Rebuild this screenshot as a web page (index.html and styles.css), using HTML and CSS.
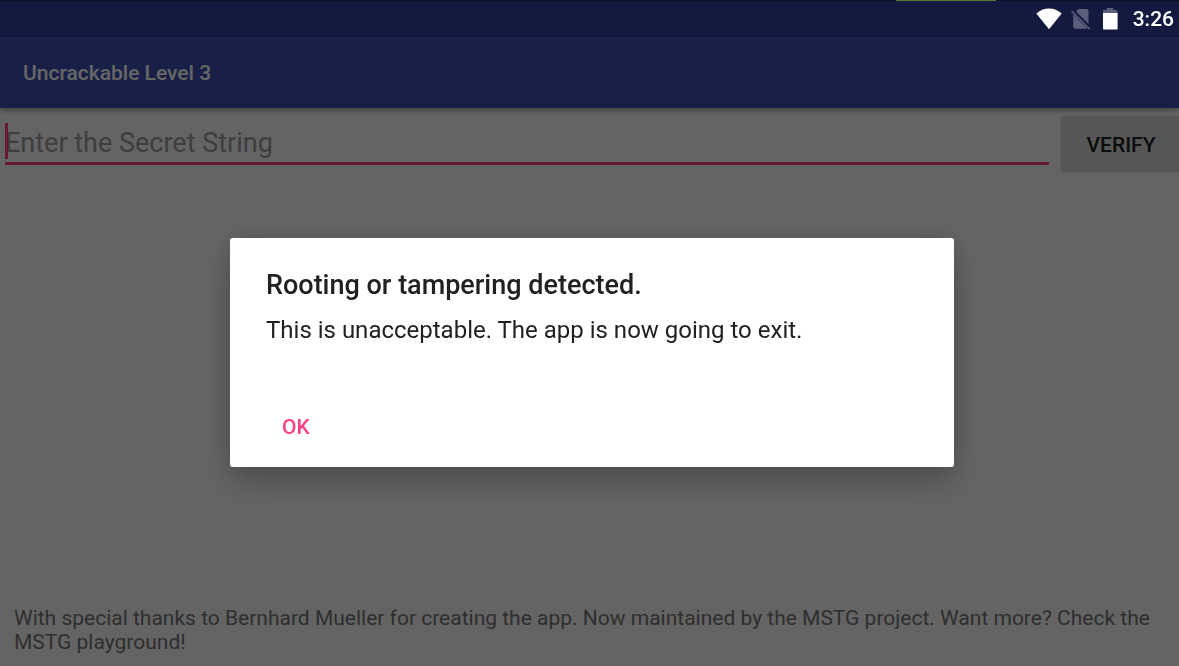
FILE: index.html
```html
<!DOCTYPE html>
<html lang="en">
<head>
    <meta charset="UTF-8">
    <title>Uncrackable Level 3</title>
    <meta name="viewport" content="width=device-width, initial-scale=1.0">
    <link rel="stylesheet" href="styles.css">
</head>
<body>

    <div class="status-bar">
        <div class="status-icons">
            <svg class="wifi" width="26" height="22" viewBox="0 0 26 22">
                <path fill="#fff" d="M13 21.200L.3 5.600C3.800 2.200 8.200.4 13 .4s9.200 1.800 12.700 5.200z"/>
            </svg>
            <svg class="no-sim" width="20" height="22" viewBox="0 0 20 22">
                <path fill="#5b5f7c" d="M5 3.500L7.500 1h8c1.300 0 2 .8 2 2v13zM2.300 6.300l14.400 14.400H4.300c-1.200 0-2-.8-2-2z"/>
                <path stroke="#5b5f7c" stroke-width="1.600" d="M.6 3l18.200 18.200"/>
            </svg>
            <svg class="battery" width="15" height="22" viewBox="0 0 15 22">
                <path fill="#5b5f7c" d="M0 6V3.200c0-.8.6-1.200 1.200-1.200h2.600V0h6.600v2h3c.8 0 1.200.5 1.200 1.200V6z"/>
                <path fill="#fff" d="M0 5h14.600v15.600c0 .6-.4 1-1 1H1c-.6 0-1-.4-1-1z"/>
            </svg>
            <span class="clock">3:26</span>
        </div>
    </div>

    <header class="toolbar">
        <h1>Uncrackable Level 3</h1>
    </header>

    <main>
        <form class="secret-form" onsubmit="return false;">
            <div class="field">
                <input type="text" id="secret" aria-label="Enter the Secret String" placeholder="Enter the Secret String">
            </div>
            <button type="submit" class="verify">VERIFY</button>
        </form>
        <p class="thanks">With special thanks to Bernhard Mueller for creating the app. Now maintained by the MSTG project. Want more? Check the MSTG playground!</p>
    </main>

    <div class="scrim">
        <div class="dialog" role="alertdialog" aria-labelledby="dialog-title" aria-describedby="dialog-text">
            <h2 id="dialog-title">Rooting or tampering detected.</h2>
            <p id="dialog-text">This is unacceptable. The app is now going to exit.</p>
            <button type="button" class="ok">OK</button>
        </div>
    </div>

</body>
</html>
```
FILE: styles.css
```css
* {
    box-sizing: border-box;
}

body {
    margin: 0;
    min-height: 100vh;
    display: flex;
    flex-direction: column;
    font-family: Roboto, sans-serif;
    background-color: #fafafa;
}

h1, h2, p {
    margin: 0;
}

.status-bar {
    position: relative;
    height: 37px;
    border-top: 1px solid #24306f;
    background-color: #303f9f;
}

/* loading strip on the top edge */
.status-bar::before {
    content: "";
    position: absolute;
    z-index: 3;
    top: -1px;
    right: 183px;
    width: 100px;
    height: 1px;
    background-color: #527d2d;
}

/* system icons stay bright above the scrim */
.status-icons {
    position: relative;
    z-index: 3;
    display: flex;
    justify-content: flex-end;
    align-items: center;
    height: 36px;
    padding-right: 5px;
    color: #fff;
}

.wifi {
    margin-right: 9px;
}

.no-sim {
    margin-right: 12px;
}

.battery {
    margin-right: 15px;
}

.clock {
    font-size: 21px;
    font-weight: 500;
    line-height: 38px;
}

.toolbar {
    position: relative;
    display: flex;
    align-items: center;
    height: 71px;
    padding: 0 23px;
    background-color: #3f51b5;
    box-shadow: 0 2px 6px rgba(0,0,0,0.4);
}

.toolbar h1 {
    color: #fff;
    font-size: 21px;
    font-weight: 500;
}

main {
    flex: 1;
    display: flex;
    flex-direction: column;
    justify-content: space-between;
}

.secret-form {
    display: flex;
    align-items: flex-start;
    padding: 8px 0 0 5px;
}

.field {
    position: relative;
    flex: 1;
    margin-right: 12px;
}

/* text cursor */
.field::before {
    content: "";
    position: absolute;
    top: 7px;
    left: 0;
    width: 3px;
    height: 36px;
    background-color: #ff4081;
}

.field input {
    display: block;
    width: 100%;
    height: 49px;
    padding: 8px 0 0;
    border: none;
    border-bottom: 3px solid #ff4081;
    outline: none;
    background: none;
    font-family: inherit;
    font-size: 27px;
}

.field input::placeholder {
    color: #9b9b9b;
    opacity: 1;
}

.verify {
    width: 118px;
    height: 55px;
    padding: 2px 0 0 2px;
    border: none;
    border-radius: 3px 0 0 3px;
    background-color: #d6d7d7;
    box-shadow: 0 1px 3px rgba(0,0,0,0.2);
    color: #212121;
    font-family: inherit;
    font-size: 21px;
    font-weight: 500;
}

.thanks {
    padding: 0 14px 12px;
    color: #757575;
    font-size: 21px;
    line-height: 24px;
}

.scrim {
    position: fixed;
    z-index: 2;
    inset: 0;
    display: flex;
    align-items: center;
    justify-content: center;
    padding: 38px 0 0 5px;
    background-color: rgba(0,0,0,0.6);
}

.dialog {
    width: 724px;
    max-width: 90%;
    padding: 31px 36px 13px;
    border-radius: 3px;
    background-color: #fff;
    box-shadow: 0 16px 32px rgba(0,0,0,0.2), 0 0 24px rgba(0,0,0,0.14);
    color: #212121;
}

.dialog h2 {
    font-size: 27px;
    font-weight: 500;
    line-height: 32px;
}

.dialog p {
    margin-top: 13px;
    font-size: 24px;
    line-height: 32px;
}

.ok {
    display: block;
    height: 54px;
    margin-top: 54px;
    padding: 0 16px;
    border: none;
    background: none;
    color: #ff4081;
    font-family: inherit;
    font-size: 21px;
    font-weight: 500;
}
```
